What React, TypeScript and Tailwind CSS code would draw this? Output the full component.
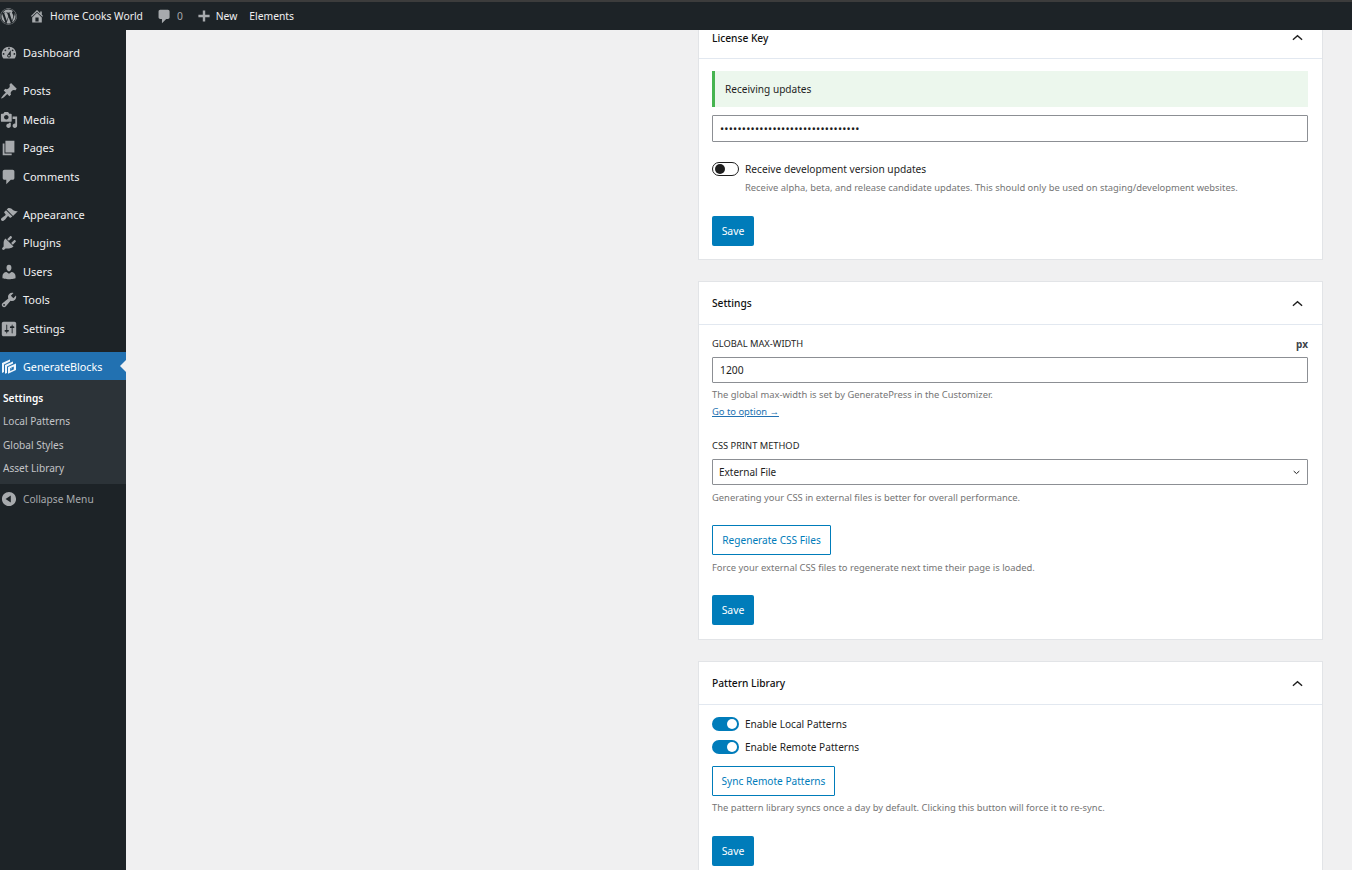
import React from 'react';
import { FaWordpress } from 'react-icons/fa';

const icons: Record<string, string> = {
  dashboard: 'M3.76 16h12.48c1.1-1.37 1.76-3.11 1.76-5 0-4.42-3.58-8-8-8s-8 3.58-8 8c0 1.89.66 3.63 1.76 5zM10 4c.55 0 1 .45 1 1s-.45 1-1 1-1-.45-1-1 .45-1 1-1zM6 6c.55 0 1 .45 1 1s-.45 1-1 1-1-.45-1-1 .45-1 1-1zm8 0c.55 0 1 .45 1 1s-.45 1-1 1-1-.45-1-1 .45-1 1-1zm-5.37 5.55L12 7v6c0 1.1-.9 2-2 2s-2-.9-2-2c0-.57.24-1.08.63-1.45zM4 10c.55 0 1 .45 1 1s-.45 1-1 1-1-.45-1-1 .45-1 1-1zm12 0c.55 0 1 .45 1 1s-.45 1-1 1-1-.45-1-1 .45-1 1-1zm-5 3c0-.55-.45-1-1-1s-1 .45-1 1 .45 1 1 1 1-.45 1-1z',
  posts: 'M10.44 3.02l1.82-1.82 6.36 6.35-1.83 1.82c-1.05-.68-2.48-.57-3.41.36l-.75.75c-.92.93-1.04 2.35-.35 3.41l-1.83 1.82-2.41-2.41-2.8 2.79c-.42.42-3.38 2.71-3.8 2.29s1.86-3.39 2.28-3.81l2.79-2.79L4.1 9.36l1.83-1.82c1.05.69 2.48.57 3.4-.36l.75-.75c.93-.92 1.05-2.35.36-3.41z',
  media: 'M13 11V4c0-.55-.45-1-1-1h-1.67L9 1H5L3.67 3H2c-.55 0-1 .45-1 1v7c0 .55.45 1 1 1h10c.55 0 1-.45 1-1zM7 4.5c1.38 0 2.5 1.12 2.5 2.5S8.38 9.5 7 9.5 4.5 8.38 4.5 7 5.62 4.5 7 4.5zM14 6h5v10.5c0 1.38-1.12 2.5-2.5 2.5S14 17.88 14 16.5s1.12-2.5 2.5-2.5c.17 0 .34.02.5.05V9h-3V6zm-4 8.05V13h2v3.5c0 1.38-1.12 2.5-2.5 2.5S7 17.88 7 16.5 8.12 14 9.5 14c.17 0 .34.02.5.05z',
  pages: 'M6 15V2h10v13H6zm-1 1h8v2H3V5h2v11z',
  comments: 'M5 2h9c1.1 0 2 .9 2 2v7c0 1.1-.9 2-2 2h-2l-5 5v-5H5c-1.1 0-2-.9-2-2V4c0-1.1.9-2 2-2z',
  appearance: 'M14.48 11.06L7.41 3.99l1.5-1.5c.5-.56 2.3-.47 3.51.32 1.21.8 1.43 1.28 2.91 2.1 1.18.64 2.45 1.26 4.45.85zm-.71.71L6.7 4.7 4.93 6.47c-.39.39-.39 1.02 0 1.41l1.06 1.06c.39.39.39 1.03 0 1.42-.6.6-1.43 1.11-2.21 1.69-.35.26-.7.53-1.01.84C1.43 13.23.4 14.89 1.58 16.07c1.18 1.18 2.84.15 4.18-1.19.31-.31.58-.66.85-1.02.57-.78 1.08-1.61 1.69-2.21.39-.39 1.02-.39 1.41 0l1.06 1.06c.39.39 1.02.39 1.41 0z',
  plugins: 'M13.11 4.36L9.87 7.6 8 5.73l3.24-3.24c.35-.34 1.05-.2 1.56.32.52.51.66 1.21.31 1.55zm-8 1.77l.91-1.12 9.01 9.01-1.19.84c-.71.71-2.63 1.16-3.82 1.16H6.14L4.9 17.26c-.59.59-1.54.59-2.12 0-.59-.58-.59-1.53 0-2.12l1.24-1.24v-3.88c0-1.13.4-3.19 1.09-3.89zm7.26 3.97l3.24-3.24c.34-.35 1.04-.21 1.55.31.52.51.66 1.21.31 1.55l-3.24 3.25z',
  users: 'M10 9.25c-2.27 0-2.73-3.44-2.73-3.44C7 4.02 7.82 2 9.97 2c2.16 0 2.98 2.02 2.71 3.81 0 0-.41 3.44-2.68 3.44zm0 2.57L12.72 10c2.39 0 4.52 2.33 4.52 4.53v2.49s-3.65 1.13-7.24 1.13c-3.65 0-7.24-1.13-7.24-1.13v-2.49c0-2.25 1.94-4.48 4.47-4.48z',
  tools: 'M16.68 9.77c-1.34 1.34-3.3 1.67-4.95.99l-5.41 6.52c-.99.99-2.59.99-3.58 0s-.99-2.59 0-3.57l6.52-5.42c-.68-1.65-.35-3.61.99-4.95 1.28-1.28 3.12-1.62 4.72-1.06l-2.89 2.89 2.82 2.82 2.86-2.87c.53 1.58.18 3.39-1.08 4.65zM3.81 16.21c.4.39 1.04.39 1.43 0 .4-.4.4-1.04 0-1.43-.39-.4-1.03-.4-1.43 0-.39.39-.39 1.03 0 1.43z',
  settings: 'M18 16V4c0-1.1-.9-2-2-2H4c-1.1 0-2 .9-2 2v12c0 1.1.9 2 2 2h12c1.1 0 2-.9 2-2zM8 11h1c.55 0 1 .45 1 1s-.45 1-1 1H8v1.5c0 .28-.22.5-.5.5s-.5-.22-.5-.5V13H6c-.55 0-1-.45-1-1s.45-1 1-1h1V5.5c0-.28.22-.5.5-.5s.5.22.5.5V11zm5-2h-1c-.55 0-1-.45-1-1s.45-1 1-1h1V5.5c0-.28.22-.5.5-.5s.5.22.5.5V7h1c.55 0 1 .45 1 1s-.45 1-1 1h-1v5.5c0 .28-.22.5-.5.5s-.5-.22-.5-.5V9z',
  home: 'M16 8.5l1.53 1.53-1.06 1.06L10 4.62l-6.47 6.47-1.06-1.06L10 2.5l4 4v-2h2v4zm-6-2.46l6 5.99V18H4v-5.97zM12 17v-5H8v5h4z',
  collapse: 'M10 2.16c4.33 0 7.84 3.51 7.84 7.84s-3.51 7.84-7.84 7.84S2.16 14.33 2.16 10 5.71 2.16 10 2.16zm2 11.72V6.12L6.18 9.97z',
  plus: 'M17 8.5v3h-5.5V17h-3v-5.5H3v-3h5.5V3h3v5.5z',
};

function Dash({ name, className }: { name: string; className: string }) {
  return (
    <svg viewBox="0 0 20 20" fill="currentColor" fillRule="evenodd" className={className}>
      <path d={icons[name]} />
    </svg>
  );
}

function MenuItem({ icon, label, className = '' }: { icon: string; label: string; className?: string }) {
  return (
    <div className={`flex items-center h-[28.5px] text-[11px] text-[#f0f0f1] ${className}`}>
      <Dash name={icon} className="w-[18px] h-[18px] text-[#a7aaad]" />
      <span className="ml-[5px]">{label}</span>
    </div>
  );
}

function Sidebar() {
  return (
    <aside className="w-[126px] shrink-0 bg-[#1d2327] pt-[9px]">
      <MenuItem icon="dashboard" label="Dashboard" className="mb-[9.5px]" />
      <MenuItem icon="posts" label="Posts" />
      <MenuItem icon="media" label="Media" />
      <MenuItem icon="pages" label="Pages" />
      <MenuItem icon="comments" label="Comments" className="mb-[9.5px]" />
      <MenuItem icon="appearance" label="Appearance" />
      <MenuItem icon="plugins" label="Plugins" />
      <MenuItem icon="users" label="Users" />
      <MenuItem icon="tools" label="Tools" />
      <MenuItem icon="settings" label="Settings" className="mb-[9px]" />

      <div className="relative flex items-center h-[28px] bg-[#2271b1] text-[10.8px] text-white">
        <svg viewBox="0 0 16 16" className="w-[16px] h-[16px] ml-[1px] mr-[6px]" fill="#f0f6fc">
          <path d="M1 5 9 1.5V3.6L3 6.4V14L1 15z" />
          <path d="M4 7 12 3.5V5.6L6 8.4V15L4 15.8z" />
          <path fillRule="evenodd" d="M7 9 15 5.5V12L7 15.8zM9.2 10.2V13L12.8 11.4V9.4L11 10.2V11L10.4 11.3V10.6L12.8 9.4V8.6z" />
        </svg>
        <span className="pt-[2px]">GenerateBlocks</span>
        <span className="absolute right-0 top-[8px] w-0 h-0 border-y-[6px] border-y-transparent border-r-[6px] border-r-[#f0f0f1]" />
      </div>

      <div className="bg-[#2c3338] pt-[7px] pb-[4px] text-[10.1px] text-[#c3c4c7]">
        <div className="h-[23.33px] pl-[3px] flex items-center font-semibold text-white">Settings</div>
        <div className="h-[23.33px] pl-[3px] flex items-center">Local Patterns</div>
        <div className="h-[23.33px] pl-[3px] flex items-center">Global Styles</div>
        <div className="h-[23.33px] pl-[3px] flex items-center">Asset Library</div>
      </div>

      <div className="flex items-center h-[28px] mt-[1px] text-[10.2px] text-[#a7aaad]">
        <Dash name="collapse" className="w-[18px] h-[18px]" />
        <span className="ml-[5px]">Collapse Menu</span>
      </div>
    </aside>
  );
}

function AdminBar() {
  return (
    <div className="shrink-0 h-[30px] border-t-2 border-[#3c3c3c] bg-[#1d2327] flex items-center text-[10.3px] text-[#f0f0f1]">
      <FaWordpress className="w-[17px] h-[17px] text-[#a7aaad]" />
      <Dash name="home" className="w-[16px] h-[16px] ml-[12px] text-[#a7aaad]" />
      <span className="ml-[5px] pt-[2px]">Home Cooks World</span>
      <Dash name="comments" className="w-[17px] h-[17px] ml-[13px] text-[#a7aaad]" />
      <span className="ml-[4px] pt-[2px] text-[#a7aaad]">0</span>
      <Dash name="plus" className="w-[16px] h-[16px] ml-[13px] text-[#a7aaad]" />
      <span className="ml-[4px] pt-[2px]">New</span>
      <span className="ml-[12px] pt-[2px]">Elements</span>
    </div>
  );
}

function Card({ title, first, children }: { title: string; first?: boolean; children: React.ReactNode }) {
  return (
    <section className={`bg-white border border-[#e2e4e7] ${first ? '-mt-[15px]' : 'mt-[21px]'}`}>
      <header className="h-[43px] flex items-center justify-between pl-[13px] pr-[19px] border-b border-[#e2e8f0] text-[10.2px] font-medium text-[#111]">
        <span className={first ? 'pt-[4px]' : 'pt-[2px]'}>{title}</span>
        <svg viewBox="0 0 12 7" className="w-[11px] h-[7px]" fill="none" stroke="#1e1e1e" strokeWidth="1.5">
          <path d="M1 6l5-4.5L11 6" />
        </svg>
      </header>
      <div className={`pl-[13px] pr-[14px] pt-[12px] ${first ? 'pb-[13px]' : 'pb-[14px]'}`}>{children}</div>
    </section>
  );
}

function Toggle({ on }: { on?: boolean }) {
  return on ? (
    <span className="w-[27px] h-[14px] rounded-full bg-[#007cba] flex items-center justify-end pr-[2px]">
      <span className="w-[10px] h-[10px] rounded-full bg-white" />
    </span>
  ) : (
    <span className="w-[27px] h-[14px] rounded-full border border-[#1e1e1e] bg-white flex items-center pl-[2px]">
      <span className="w-[10px] h-[10px] rounded-full bg-[#1e1e1e]" />
    </span>
  );
}

function SaveButton() {
  return (
    <button className="block w-[42px] h-[30px] pt-[2px] rounded-[2px] bg-[#007cba] text-white text-[10.4px]">Save</button>
  );
}

function OutlineButton({ label, className }: { label: string; className: string }) {
  return (
    <button className={`block h-[30px] pt-[2px] rounded-[1px] border border-[#007cba] text-[#007cba] text-[10.1px] ${className}`}>
      {label}
    </button>
  );
}

function Help({ children, className = '' }: { children: React.ReactNode; className?: string }) {
  return <p className={`text-[9.4px] leading-[14px] text-[#757575] ${className}`}>{children}</p>;
}

function FieldLabel({ children }: { children: React.ReactNode }) {
  return <div className="text-[9.3px] leading-[14px] uppercase text-[#1e1e1e]">{children}</div>;
}

export default function App() {
  return (
    <div className="h-screen overflow-hidden flex flex-col bg-[#f0f0f1] font-['Noto_Sans','Open_Sans',sans-serif] relative z-0">
      <div className="relative z-10">
        <AdminBar />
      </div>
      <div className="flex flex-1 min-h-0">
        <Sidebar />
        <main className="flex-1 flex justify-end pr-[29px] min-w-0">
          <div className="w-[625px]">
            <Card title="License Key" first>
              <div className="h-[36px] pt-[2px] flex items-center border-l-[3px] border-[#46b450] bg-[#ecf7ed] pl-[10px] text-[10.1px] text-[#1e1e1e]">
                Receiving updates
              </div>
              <div className="mt-[8px] h-[27px] pt-[2px] flex items-center border border-[#8c8f94] rounded-[1px] pl-[7px] text-[11px] tracking-[0.23px] text-[#1e1e1e]">
                ••••••••••••••••••••••••••••••••
              </div>
              <div className="mt-[20px] flex items-center gap-[6px] text-[10.2px] leading-[14px] text-[#1e1e1e]">
                <Toggle />
                <span>Receive development version updates</span>
              </div>
              <Help className="ml-[33px] mt-[5px]">
                Receive alpha, beta, and release candidate updates. This should only be used on staging/development websites.
              </Help>
              <div className="mt-[21px]">
                <SaveButton />
              </div>
            </Card>

            <Card title="Settings">
              <div className="flex justify-between items-start">
                <FieldLabel>Global max-width</FieldLabel>
                <span className="text-[10px] leading-[14px] font-bold text-[#3c434a]">px</span>
              </div>
              <div className="mt-[6px] h-[26px] pt-[2px] flex items-center border border-[#8c8f94] rounded-[1px] pl-[7px] text-[10.3px] text-[#1e1e1e]">
                1200
              </div>
              <Help className="mt-[5px]">The global max-width is set by GeneratePress in the Customizer.</Help>
              <a className="block mt-[3px] text-[9.4px] leading-[14px] text-[#2271b1] underline">Go to option →</a>
              <div className="mt-[20px]">
                <FieldLabel>CSS Print Method</FieldLabel>
              </div>
              <div className="mt-[6px] h-[26px] flex items-center justify-between border border-[#8c8f94] rounded-[1px] pl-[6px] pr-[7px] text-[10px] text-[#1e1e1e]">
                <span>External File</span>
                <svg viewBox="0 0 10 6" className="w-[7px] h-[5px]" fill="none" stroke="#1e1e1e" strokeWidth="1.4">
                  <path d="M1 1l4 3.5L9 1" />
                </svg>
              </div>
              <Help className="mt-[6px]">Generating your CSS in external files is better for overall performance.</Help>
              <OutlineButton label="Regenerate CSS Files" className="mt-[20px] w-[119px]" />
              <Help className="mt-[6px]">Force your external CSS files to regenerate next time their page is loaded.</Help>
              <div className="mt-[20px]">
                <SaveButton />
              </div>
            </Card>

            <Card title="Pattern Library">
              <div className="flex items-center gap-[6px] text-[10.1px] leading-[14px] text-[#1e1e1e]">
                <Toggle on />
                <span>Enable Local Patterns</span>
              </div>
              <div className="mt-[9px] flex items-center gap-[6px] text-[10.1px] leading-[14px] text-[#1e1e1e]">
                <Toggle on />
                <span>Enable Remote Patterns</span>
              </div>
              <OutlineButton label="Sync Remote Patterns" className="mt-[12px] w-[123px]" />
              <Help className="mt-[5px]">The pattern library syncs once a day by default. Clicking this button will force it to re-sync.</Help>
              <div className="mt-[21px]">
                <SaveButton />
              </div>
            </Card>
          </div>
        </main>
      </div>
    </div>
  );
}
